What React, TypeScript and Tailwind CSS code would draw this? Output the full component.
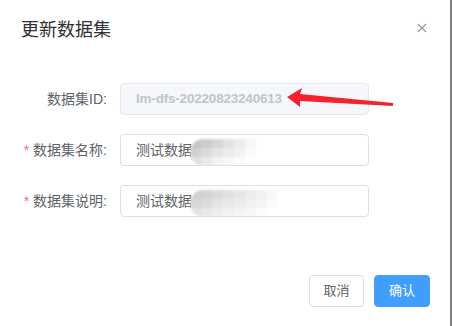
import React from "react";

const font = { fontFamily: '"Liberation Sans", "Noto Sans CJK SC", sans-serif' };

function Mosaic({ cols }: { cols: string[][] }) {
  return (
    <div className="ml-[-2px] mt-[4px] flex flex-col overflow-hidden rounded-l-full blur-[1px]">
      {cols.map((row, i) => (
        <div key={i} className="flex">
          {row.map((c, j) => (
            <div key={j} className="h-[9px] w-[11px]" style={{ background: c }} />
          ))}
        </div>
      ))}
    </div>
  );
}

function Row({
  label,
  required,
  children,
  disabled,
}: {
  label: string;
  required?: boolean;
  children: React.ReactNode;
  disabled?: boolean;
}) {
  return (
    <div className="flex items-center">
      <div className="flex w-[120px] justify-end pr-[13px] text-[14px] text-[#606266]">
        {required && <span className="mr-[4px] text-[#f56c6c]">*</span>}
        <span>{label}</span>
      </div>
      <div
        className={`flex h-[32px] w-[249px] items-center overflow-hidden rounded-[4px] border px-[15px] text-[14px] ${
          disabled
            ? "border-[#e4e7ed] bg-[#f5f7fa] text-[#c0c4cc]"
            : "border-[#dcdfe6] bg-white text-[#606266]"
        }`}
      >
        {children}
      </div>
    </div>
  );
}

export default function App() {
  return (
    <div className="relative flex h-[326px] w-[452px] bg-white" style={font}>
      <div className="flex w-[450px] flex-col">
        <div className="flex items-center justify-between pl-[21px] pr-[23px] pt-[18px]">
          <span className="text-[18px] leading-[24px] text-[#303133]">更新数据集</span>
          <svg width="10" height="10" viewBox="0 0 10 10" className="-mt-[5px]">
            <path d="M1 1 L9 9 M9 1 L1 9" stroke="#909399" strokeWidth="1.1" />
          </svg>
        </div>
        <div className="mt-[41px] flex flex-col gap-[19px]">
          <Row label="数据集ID:" disabled>
            <span className="text-[13.5px] font-semibold tracking-[-0.2px]">lm-dfs-20220823240613</span>
          </Row>
          <Row label="数据集名称:" required>
            <span>测试数据</span>
            <Mosaic
              cols={[
                ["#c6c6c6", "#cdcdcd", "#d6d6d6", "#e2e2e2", "#ececec", "#f6f6f6"],
                ["#d0d0d0", "#dadada", "#e5e5e5", "#ebebeb", "#f2f2f2", "#fafafa"],
                ["#e0e0e0", "#e9e9e9", "#f2f2f2", "#f6f6f6", "#fbfbfb", "#ffffff"],
              ]}
            />
          </Row>
          <Row label="数据集说明:" required>
            <span>测试数据</span>
            <Mosaic
              cols={[
                ["#d0d0d0", "#d4d4d4", "#dadada", "#e0e0e0", "#e6e6e6", "#ececec", "#f2f2f2", "#f8f8f8"],
                ["#d6d6d6", "#dcdcdc", "#e4e4e4", "#e8e8e8", "#ececec", "#f0f0f0", "#f5f5f5", "#fafafa"],
                ["#e2e2e2", "#e8e8e8", "#eeeeee", "#f2f2f2", "#f5f5f5", "#f8f8f8", "#fcfcfc", "#ffffff"],
              ]}
            />
          </Row>
        </div>
        <div className="mt-auto mb-[19px] flex justify-end gap-[10px] pr-[20px]">
          <button className="h-[32px] w-[55px] rounded-[4px] border border-[#dcdfe6] bg-white text-[13px] text-[#606266]">
            取消
          </button>
          <button className="h-[32px] w-[56px] rounded-[4px] border border-[#409eff] bg-[#409eff] text-[13px] text-white">
            确认
          </button>
        </div>
      </div>
      <div className="h-full w-[2px] bg-[#7f7f7f]" />
      <svg className="pointer-events-none absolute left-0 top-0" width="452" height="326">
        <polygon
          points="287,97 302,88 300,94 393,103 393,106 300,101 300,107"
          fill="#f5222d"
        />
      </svg>
    </div>
  );
}
